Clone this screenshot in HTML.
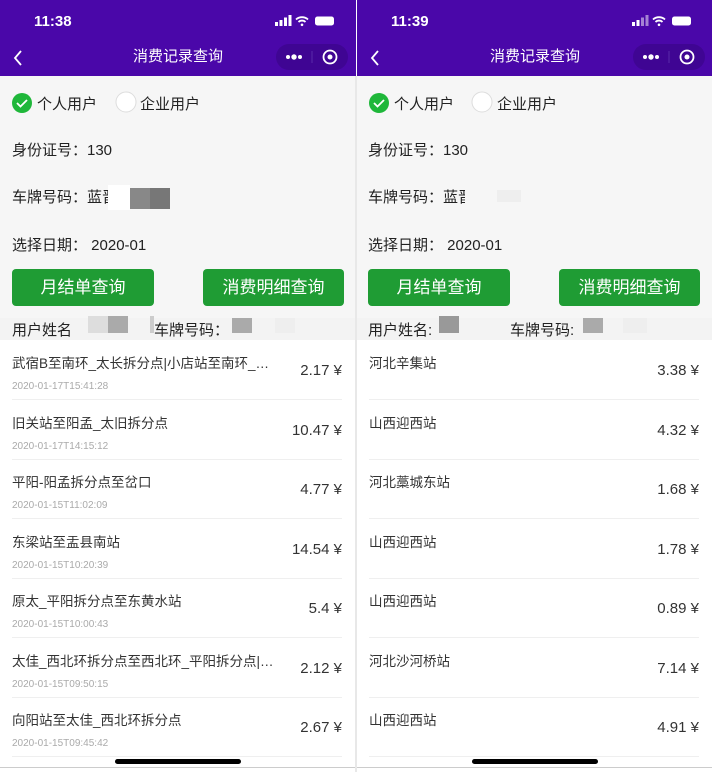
<!DOCTYPE html>
<html><head><meta charset="utf-8"><style>
*{margin:0;padding:0;box-sizing:border-box}
body{width:712px;height:772px;overflow:hidden;background:#fff;font-family:"Liberation Sans","Noto Sans CJK SC",sans-serif;color:#222;position:relative}
.p{position:absolute;top:0;width:356px;height:772px;overflow:hidden;background:#fff}
.a{position:absolute}
.hd{left:0;top:0;width:356px;height:76px;background:#4a07a9}
.time{left:34px;top:13px;font-size:15px;color:#fff;font-weight:bold}
.title{left:0;width:356px;top:45px;text-align:center;color:#fff;font-size:15px}
.cap{left:276px;top:44px;width:72px;height:26px;border-radius:13px;background:#3f0593}
.form{left:0;top:76px;width:356px;height:242px;background:#f6f6f6}
.lbl{font-size:15px;color:#222}
.btn{top:269px;height:37px;background:#1f9c34;border-radius:4px;color:#fff;font-size:17px;text-align:center;line-height:37px}
.urow{left:0;top:318px;width:356px;height:22px;background:#f3f3f3;font-size:15px}
.row{left:12px;width:330px;height:59.6px;border-bottom:1px solid #efefef}
.rt{position:absolute;left:0;top:12px;font-size:13.5px;color:#333;white-space:nowrap;width:265px;overflow:hidden;text-overflow:ellipsis}
.rd{position:absolute;left:0;top:41px;font-size:10px;color:#aaa}
.ra{position:absolute;right:0;top:22px;font-size:15px;color:#333}
.home{left:115px;top:759px;width:126px;height:5px;border-radius:3px;background:#000}
.bl{left:0;top:767px;width:356px;height:1px;background:#ccc}
</style></head><body>

<div class="p" style="left:0">
<div class="a hd"></div>
<div class="a time">11:38</div>
<svg class="a" style="left:275px;top:15px" width="62" height="12"><rect x="0" y="7" width="3" height="4" fill="#fff"/><rect x="4.5" y="5" width="3" height="6" fill="#fff"/><rect x="9" y="2.5" width="3" height="8.5" fill="#fff"/><rect x="13.5" y="0" width="3" height="11" fill="#fff"/><path d="M21 4.5a9 9 0 0 1 12 0M23.5 7a5 5 0 0 1 7 0" stroke="#fff" stroke-width="1.8" fill="none"/><circle cx="27" cy="9.8" r="1.3" fill="#fff"/><rect x="40" y="1.5" width="19" height="9" rx="2.5" fill="#fff"/></svg>
<svg class="a" style="left:12px;top:49px" width="12" height="18"><path d="M9 2L3 9l6 7" stroke="#fff" stroke-width="1.8" fill="none"/></svg>
<div class="a title">消费记录查询</div>
<div class="a cap"></div>
<svg class="a" style="left:276px;top:44px" width="72" height="26"><circle cx="12" cy="13" r="2" fill="#fff"/><circle cx="18" cy="13" r="2.7" fill="#fff"/><circle cx="24" cy="13" r="2" fill="#fff"/><line x1="36" y1="7" x2="36" y2="19" stroke="#5a2aa8" stroke-width="1"/><circle cx="54" cy="13" r="6.5" stroke="#fff" stroke-width="1.8" fill="none"/><circle cx="54" cy="13" r="2.5" fill="#fff"/></svg>
<div class="a form"></div>
<svg class="a" style="left:11px;top:92px" width="22" height="22"><circle cx="11" cy="11" r="10" fill="#1fb73a"/><path d="M6 11l3.5 3.5L16 8" stroke="#fff" stroke-width="1.8" fill="none"/></svg>
<div class="a lbl" style="left:37px;top:93px">个人用户</div>
<svg class="a" style="left:115px;top:91px" width="22" height="22"><circle cx="11" cy="11" r="10" fill="#fff" stroke="#ddd"/></svg>
<div class="a lbl" style="left:140px;top:93px">企业用户</div>
<div class="a lbl" style="left:12px;top:139px">身份证号：130</div>
<div class="a lbl" style="left:12px;top:186px">车牌号码：蓝晋</div>
<div class="a" style="left:108px;top:185px;width:22px;height:25px;background:#fff"></div>
<div class="a" style="left:130px;top:188px;width:20px;height:21px;background:#888"></div>
<div class="a" style="left:150px;top:188px;width:20px;height:21px;background:#777"></div>
<div class="a lbl" style="left:12px;top:234px">选择日期：&nbsp;2020-01</div>
<div class="a btn" style="left:12px;width:142px">月结单查询</div>
<div class="a btn" style="left:203px;width:141px">消费明细查询</div>
<div class="a urow"></div>
<div class="a lbl" style="left:12px;top:319px">用户姓名</div>
<div class="a" style="left:88px;top:316px;width:20px;height:17px;background:#ddd"></div>
<div class="a" style="left:108px;top:316px;width:20px;height:17px;background:#aaa"></div>
<div class="a" style="left:150px;top:316px;width:4px;height:17px;background:#ccc"></div>
<div class="a lbl" style="left:154px;top:319px">车牌号码：</div>
<div class="a" style="left:232px;top:318px;width:20px;height:15px;background:#aaa"></div>
<div class="a" style="left:275px;top:318px;width:20px;height:15px;background:#eee"></div>
<div class="a row" style="top:340px"><div class="rt">武宿B至南环_太长拆分点|小店站至南环_太...</div><div class="rd">2020-01-17T15:41:28</div><div class="ra">2.17 ¥</div></div>
<div class="a row" style="top:400px"><div class="rt">旧关站至阳孟_太旧拆分点</div><div class="rd">2020-01-17T14:15:12</div><div class="ra">10.47 ¥</div></div>
<div class="a row" style="top:459px"><div class="rt">平阳-阳孟拆分点至岔口</div><div class="rd">2020-01-15T11:02:09</div><div class="ra">4.77 ¥</div></div>
<div class="a row" style="top:519px"><div class="rt">东梁站至盂县南站</div><div class="rd">2020-01-15T10:20:39</div><div class="ra">14.54 ¥</div></div>
<div class="a row" style="top:578px"><div class="rt">原太_平阳拆分点至东黄水站</div><div class="rd">2020-01-15T10:00:43</div><div class="ra">5.4 ¥</div></div>
<div class="a row" style="top:638px"><div class="rt">太佳_西北环拆分点至西北环_平阳拆分点|西...</div><div class="rd">2020-01-15T09:50:15</div><div class="ra">2.12 ¥</div></div>
<div class="a row" style="top:697px"><div class="rt">向阳站至太佳_西北环拆分点</div><div class="rd">2020-01-15T09:45:42</div><div class="ra">2.67 ¥</div></div>
<div class="a home"></div>
<div class="a bl"></div>
</div>

<div class="a" style="left:355px;top:76px;width:2px;height:696px;background:#e8e8e8"></div>

<div class="p" style="left:357px;width:355px">
<div class="a hd"></div>
<div class="a time">11:39</div>
<svg class="a" style="left:275px;top:15px" width="62" height="12"><rect x="0" y="7" width="3" height="4" fill="#fff"/><rect x="4.5" y="5" width="3" height="6" fill="#fff"/><rect x="9" y="2.5" width="3" height="8.5" fill="#fff" opacity=".5"/><rect x="13.5" y="0" width="3" height="11" fill="#fff" opacity=".5"/><path d="M21 4.5a9 9 0 0 1 12 0M23.5 7a5 5 0 0 1 7 0" stroke="#fff" stroke-width="1.8" fill="none"/><circle cx="27" cy="9.8" r="1.3" fill="#fff"/><rect x="40" y="1.5" width="19" height="9" rx="2.5" fill="#fff"/></svg>
<svg class="a" style="left:12px;top:49px" width="12" height="18"><path d="M9 2L3 9l6 7" stroke="#fff" stroke-width="1.8" fill="none"/></svg>
<div class="a title">消费记录查询</div>
<div class="a cap"></div>
<svg class="a" style="left:276px;top:44px" width="72" height="26"><circle cx="12" cy="13" r="2" fill="#fff"/><circle cx="18" cy="13" r="2.7" fill="#fff"/><circle cx="24" cy="13" r="2" fill="#fff"/><line x1="36" y1="7" x2="36" y2="19" stroke="#5a2aa8" stroke-width="1"/><circle cx="54" cy="13" r="6.5" stroke="#fff" stroke-width="1.8" fill="none"/><circle cx="54" cy="13" r="2.5" fill="#fff"/></svg>
<div class="a form"></div>
<svg class="a" style="left:11px;top:92px" width="22" height="22"><circle cx="11" cy="11" r="10" fill="#1fb73a"/><path d="M6 11l3.5 3.5L16 8" stroke="#fff" stroke-width="1.8" fill="none"/></svg>
<div class="a lbl" style="left:37px;top:93px">个人用户</div>
<svg class="a" style="left:114px;top:91px" width="22" height="22"><circle cx="11" cy="11" r="10" fill="#fff" stroke="#ddd"/></svg>
<div class="a lbl" style="left:140px;top:93px">企业用户</div>
<div class="a lbl" style="left:11px;top:139px">身份证号：130</div>
<div class="a lbl" style="left:11px;top:186px">车牌号码：蓝晋</div>
<div class="a" style="left:108px;top:185px;width:60px;height:25px;background:#f6f6f6"></div>
<div class="a" style="left:140px;top:190px;width:24px;height:12px;background:#eee"></div>
<div class="a lbl" style="left:11px;top:234px">选择日期：&nbsp;2020-01</div>
<div class="a btn" style="left:11px;width:142px">月结单查询</div>
<div class="a btn" style="left:202px;width:141px">消费明细查询</div>
<div class="a urow"></div>
<div class="a lbl" style="left:11px;top:319px">用户姓名:</div>
<div class="a" style="left:82px;top:316px;width:20px;height:17px;background:#999"></div>
<div class="a lbl" style="left:153px;top:319px">车牌号码: </div>
<div class="a" style="left:226px;top:318px;width:20px;height:15px;background:#aaa"></div>
<div class="a" style="left:266px;top:318px;width:24px;height:15px;background:#eee"></div>
<div class="a row" style="top:340px"><div class="rt">河北辛集站</div><div class="ra">3.38 ¥</div></div>
<div class="a row" style="top:400px"><div class="rt">山西迎西站</div><div class="ra">4.32 ¥</div></div>
<div class="a row" style="top:459px"><div class="rt">河北藁城东站</div><div class="ra">1.68 ¥</div></div>
<div class="a row" style="top:519px"><div class="rt">山西迎西站</div><div class="ra">1.78 ¥</div></div>
<div class="a row" style="top:578px"><div class="rt">山西迎西站</div><div class="ra">0.89 ¥</div></div>
<div class="a row" style="top:638px"><div class="rt">河北沙河桥站</div><div class="ra">7.14 ¥</div></div>
<div class="a row" style="top:697px"><div class="rt">山西迎西站</div><div class="ra">4.91 ¥</div></div>
<div class="a home"></div>
<div class="a bl"></div>
</div>
</body></html>
